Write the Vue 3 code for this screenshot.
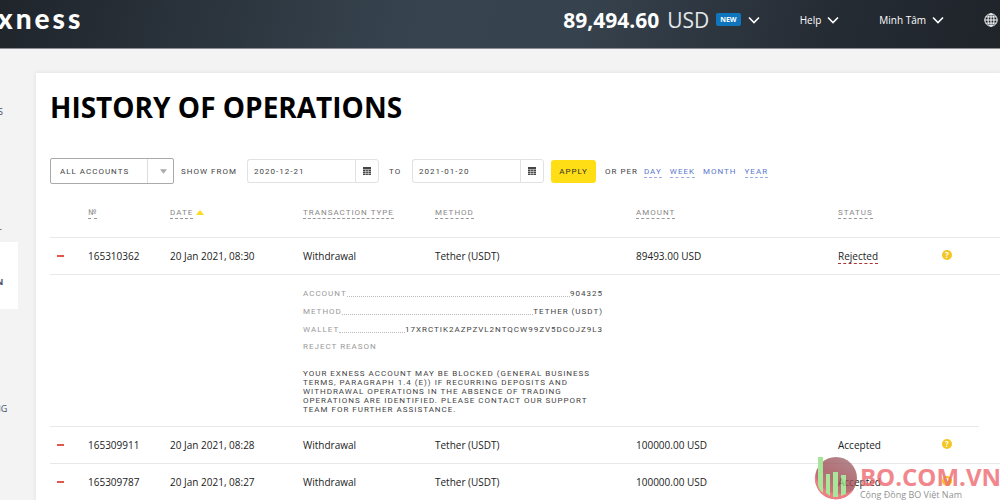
<script setup>
import { ref } from 'vue'

const account = ref('all')
const from = ref('2020-12-21')
const to = ref('2021-01-20')

const menu = [
  { label: 'S', cls: 'm-first' },
  { label: '-', cls: 'm-second' },
  { label: 'N', cls: 'active' },
  { label: 'NG', cls: 'm-last' }
]
const periods = [
  { label: 'DAY', dashed: true },
  { label: 'WEEK', dashed: true },
  { label: 'MONTH', dashed: false },
  { label: 'YEAR', dashed: true }
]
const columns = ['№', 'DATE', 'TRANSACTION TYPE', 'METHOD', 'AMOUNT', 'STATUS']
const rows = [
  {
    id: '165310362', date: '20 Jan 2021, 08:30', amount: '89493.00 USD', status: 'Rejected',
    details: [
      ['ACCOUNT', '904325'],
      ['METHOD', 'TETHER (USDT)'],
      ['WALLET', '17XRCTIK2AZPZVL2NTQCW99ZV5DCOJZ9L3']
    ]
  },
  { id: '165309911', date: '20 Jan 2021, 08:28', amount: '100000.00 USD', status: 'Accepted' },
  { id: '165309787', date: '20 Jan 2021, 08:27', amount: '100000.00 USD', status: 'Accepted' }
]
</script>

<template>
  <div class="page">
    <header class="topbar">
      <a class="logo" href="#">exness</a>
      <nav class="top-nav">
        <button class="balance" type="button">
          <strong>89,494.60</strong>
          <span class="currency">USD</span>
          <span class="badge">NEW</span>
          <svg class="chev" viewBox="0 0 12 8"><path d="M1 1.5l5 5 5-5" /></svg>
        </button>
        <button class="top-link" type="button">
          Help
          <svg class="chev" viewBox="0 0 12 8"><path d="M1 1.5l5 5 5-5" /></svg>
        </button>
        <button class="top-link" type="button">
          Minh Tâm
          <svg class="chev" viewBox="0 0 12 8"><path d="M1 1.5l5 5 5-5" /></svg>
        </button>
        <button class="top-link" type="button" aria-label="Language">
          <svg class="globe" viewBox="0 0 14 14">
            <circle cx="7" cy="7" r="6.2" />
            <ellipse cx="7" cy="7" rx="3" ry="6.2" />
            <path d="M7 .8v12.4M.8 7h12.4M1.8 3.9h10.4M1.8 10.1h10.4" />
          </svg>
        </button>
      </nav>
    </header>

    <div class="body">
      <nav class="sidebar">
        <a v-for="m in menu" :key="m.label" href="#" :class="m.cls">{{ m.label }}</a>
      </nav>

      <main class="card">
        <h1>HISTORY OF OPERATIONS</h1>

        <form class="filters" @submit.prevent>
          <div class="select">
            <select v-model="account" aria-label="Accounts">
              <option value="all">ALL ACCOUNTS</option>
            </select>
            <span class="arrow"><svg viewBox="0 0 8 5"><path d="M0 0h8L4 5z" /></svg></span>
          </div>
          <label class="from-label" for="from">SHOW FROM</label>
          <div class="date">
            <input id="from" v-model="from" type="text">
            <button type="button" aria-label="Pick start date">
              <svg viewBox="0 0 8 8"><path d="M0 0h8v8H0z" /><path class="lines" d="M0 2.5h8M0 4.5h8M0 6.5h8M2.7 2.5v5.5M5.3 2.5v5.5" /></svg>
            </button>
          </div>
          <label class="to-label" for="to">TO</label>
          <div class="date">
            <input id="to" v-model="to" type="text">
            <button type="button" aria-label="Pick end date">
              <svg viewBox="0 0 8 8"><path d="M0 0h8v8H0z" /><path class="lines" d="M0 2.5h8M0 4.5h8M0 6.5h8M2.7 2.5v5.5M5.3 2.5v5.5" /></svg>
            </button>
          </div>
          <button class="apply" type="submit">APPLY</button>
          <span class="per">OR PER</span>
          <div class="periods">
            <a v-for="p in periods" :key="p.label" href="#" :class="{ dashed: p.dashed }">{{ p.label }}</a>
          </div>
        </form>

        <table>
          <colgroup>
            <col class="c-toggle"><col class="c-id"><col class="c-date"><col class="c-type">
            <col class="c-method"><col class="c-amount"><col class="c-status"><col class="c-help"><col>
          </colgroup>
          <thead>
            <tr>
              <th></th>
              <th v-for="c in columns" :key="c">
                <span class="sort">{{ c }}</span>
                <svg v-if="c === 'DATE'" class="up" viewBox="0 0 8 5"><path d="M0 5h8L4 0z" /></svg>
              </th>
              <th></th>
              <th></th>
            </tr>
          </thead>
          <tbody v-for="(r, i) in rows" :key="r.id">
            <tr class="op" :class="{ 'after-details': i > 0 && rows[i - 1].details }">
              <td><button class="minus" type="button" aria-label="Toggle details"></button></td>
              <td>{{ r.id }}</td>
              <td>{{ r.date }}</td>
              <td>Withdrawal</td>
              <td>Tether (USDT)</td>
              <td>{{ r.amount }}</td>
              <td><span :class="{ rejected: r.status === 'Rejected' }">{{ r.status }}</span></td>
              <td><button class="q" type="button">?</button></td>
              <td></td>
            </tr>
            <tr v-if="r.details" class="more">
              <td colspan="3"></td>
              <td colspan="6">
                <dl>
                  <div v-for="d in r.details" :key="d[0]">
                    <dt>{{ d[0] }}</dt><i></i><dd>{{ d[1] }}</dd>
                  </div>
                </dl>
                <p class="reason">REJECT REASON</p>
                <p class="text">YOUR EXNESS ACCOUNT MAY BE BLOCKED (GENERAL BUSINESS<br>TERMS, PARAGRAPH 1.4 (E)) IF RECURRING DEPOSITS AND<br>WITHDRAWAL OPERATIONS IN THE ABSENCE OF TRADING<br>OPERATIONS ARE IDENTIFIED. PLEASE CONTACT OUR SUPPORT<br>TEAM FOR FURTHER ASSISTANCE.</p>
              </td>
            </tr>
          </tbody>
        </table>
      </main>
    </div>

    <div class="watermark">
      <svg viewBox="0 0 44 44">
        <defs>
          <linearGradient id="disc" x1="0.8" y1="0" x2="0.2" y2="1">
            <stop offset="0" stop-color="#a06a70" />
            <stop offset="0.5" stop-color="#a04a52" />
            <stop offset="1" stop-color="#e0555c" />
          </linearGradient>
        </defs>
        <circle cx="22" cy="22" r="21" fill="url(#disc)" />
        <path d="M1 20a21 21 0 0 0 39 13q-6 6-14 5Q8 38 1 20z" fill="#ea5f66" />
        <path d="M4 1h5v36q-5-4-5-9zM12 18h4v22l-4-3zM19 16h5v25h-5zM27 19h5v19l-5 2z" fill="#93e083" />
      </svg>
      <div>
        <div class="wm-name">BO.COM.VN</div>
        <div class="wm-sub">Cộng Đồng BO Việt Nam</div>
      </div>
    </div>
  </div>
</template>

<style>
body { margin: 0; background: #f3f3f4; }
html { overflow: hidden; }
</style>

<style scoped>
.page {
  position: relative;
  height: 100vh;
  overflow: hidden;
  display: flex;
  flex-direction: column;
  background: #f3f3f4;
  font-family: "Open Sans", "Noto Sans", sans-serif;
  color: #222;
}
button, input, select { font: inherit; margin: 0; padding: 0; color: inherit; border: 0; background: none; }
a { text-decoration: none; color: inherit; }

.topbar {
  flex: none;
  display: flex;
  justify-content: space-between;
  height: 48px;
  border-bottom: 1px solid #8d8f94;
  background: linear-gradient(105deg, #20252c 0%, #262d35 12%, #37444f 42%, #36424d 58%, #262c34 82%, #1f242b 100%);
  color: #fff;
}
.logo {
  margin-left: -20px;
  font: 900 28px/36px Lato, sans-serif;
  letter-spacing: 3px;
}
.top-nav { display: flex; align-items: center; gap: 40px; height: 39px; margin-right: 2px; }
.top-nav button { display: flex; align-items: center; }
.chev { width: 12px; height: 8px; fill: none; stroke: #fff; stroke-width: 1.6; }
.balance { font-size: 21px; line-height: 28px; }
.balance strong { font-weight: 700; }
.currency { margin-left: 8px; color: #e4e7ea; }
.badge {
  margin: 0 7px;
  padding: 0 4px;
  border-radius: 2px;
  background: #0f75bd;
  font-size: 7px;
  font-weight: 700;
  line-height: 13px;
}
.top-link { font-size: 10px; gap: 6px; }
.globe { width: 14px; height: 14px; fill: none; stroke: #fff; stroke-width: 1; }

.body { flex: 1; display: flex; min-height: 0; }
.sidebar {
  flex: none;
  width: 18px;
  margin-right: 18px;
  display: flex;
  flex-direction: column;
  align-items: flex-start;
  font-size: 9px;
  line-height: 12px;
  color: #4a4d63;
}
.sidebar .m-first { margin: 57px 0 0 -2px; }
.sidebar .m-second { margin: 105px 0 0 -1px; }
.sidebar .active {
  align-self: stretch;
  margin-top: 7px;
  padding: 34px 0 21px;
  text-indent: -4px;
  background: #fff;
  font-weight: 700;
}
.sidebar .m-last { margin: 94px 0 0 -6px; }

.card {
  flex: 1;
  min-width: 0;
  margin-top: 24px;
  padding-left: 14px;
  background: #fff;
  box-shadow: 0 0 4px #dcdcde;
}
h1 { margin: 15px 0 0; font-size: 28px; font-weight: 700; line-height: 38px; color: #000; }

.filters {
  display: flex;
  align-items: center;
  margin-top: 31px;
  height: 28px;
  font-family: Roboto, "Open Sans", sans-serif;
  font-size: 8px;
  letter-spacing: 1px;
  color: #444;
  white-space: nowrap;
}
.select {
  position: relative;
  width: 124px;
  height: 26px;
  box-sizing: border-box;
  border: 1px solid #aaa;
  border-radius: 2px;
}
.select select { width: 100%; height: 24px; padding-left: 9px; appearance: none; letter-spacing: 1px; }
.arrow {
  position: absolute;
  top: 0;
  right: 0;
  width: 26px;
  height: 24px;
  box-sizing: border-box;
  padding-left: 6px;
  border-left: 1px solid #ddd;
  display: flex;
  align-items: center;
  justify-content: center;
  pointer-events: none;
}
.arrow svg { width: 7px; height: 5px; fill: #aaa; }
.from-label { width: 66px; margin-left: 7px; }
.to-label { width: 13px; margin: 0 10px; }
.date { display: flex; width: 132px; height: 24px; }
.date input {
  flex: 1;
  min-width: 0;
  padding-left: 6px;
  border: 1px solid #e2e2e2;
  border-right: 0;
  border-radius: 3px 0 0 3px;
  letter-spacing: 1px;
}
.date button {
  width: 24px;
  border: 1px solid #e2e2e2;
  border-radius: 0 3px 3px 0;
  display: flex;
  align-items: center;
  justify-content: center;
}
.date svg { width: 8px; height: 8px; fill: #444; }
.date .lines { stroke: #fff; stroke-width: .5; fill: none; }
.apply {
  width: 45px;
  height: 23px;
  margin-left: 7px;
  border-radius: 3px;
  background: #ffde16;
  color: #333;
  letter-spacing: 1px;
}
.per { margin: 0 6px 0 9px; }
.periods { display: flex; gap: 8px; color: #5b76cc; line-height: 11px; }
.periods a { border-top: 1px solid transparent; border-bottom: 1px solid transparent; }
.periods .dashed { border-bottom: 1px dashed #9aace6; }

table { width: 100%; margin-top: 4px; border-collapse: collapse; table-layout: fixed; }
.c-toggle { width: 38px; }
.c-id { width: 82px; }
.c-date { width: 133px; }
.c-type { width: 132px; }
.c-method { width: 201px; }
.c-amount { width: 202px; }
.c-status { width: 104px; }
.c-help { width: 37px; }
th, td { padding: 0; text-align: left; }
th {
  height: 48px;
  font-family: Roboto, "Open Sans", sans-serif;
  font-size: 8px;
  font-weight: 400;
  line-height: 11px;
  letter-spacing: 1px;
  color: #888;
  white-space: nowrap;
}
.sort { display: inline-block; border-bottom: 1px dashed #999; }
.up { width: 8px; height: 5px; margin-left: 3px; fill: #fcdc20; }
.op td { height: 36px; border-top: 1px solid #e8e8e8; font-size: 10px; line-height: 16px; white-space: nowrap; }
.op.after-details td:last-child { border-top: 0; }
tbody:last-child { border-bottom: 1px solid #e8e8e8; }
.minus { display: block; width: 7px; height: 2px; margin-left: 7px; background: #e2574c; }
.rejected { display: inline-block; line-height: 14px; border-bottom: 1px dashed #a33; }
.q {
  display: block;
  width: 10px;
  height: 10px;
  margin-bottom: 3px;
  border-radius: 50%;
  background: #f3c623;
  color: #fff;
  font-size: 8px;
  font-weight: 700;
  line-height: 10px;
}
.more td {
  border-top: 1px solid #e8e8e8;
  height: 151px;
  vertical-align: top;
  font-family: Roboto, "Open Sans", sans-serif;
  font-size: 8px;
  letter-spacing: 1px;
}
dl { width: 300px; margin: 10px 0 0; }
dl div { display: flex; height: 18px; line-height: 18px; }
dt { color: #999; }
dl i { flex: 1; height: 11px; border-bottom: 1px dotted #bbb; }
dd { margin: 0; color: #444; }
.reason { margin: 0; line-height: 16px; color: #999; }
.text { margin: 14px 0 0; line-height: 9px; color: #444; }

.watermark {
  position: absolute;
  right: -1px;
  bottom: 0;
  display: flex;
  align-items: flex-end;
  gap: 2px;
  opacity: .8;
  white-space: nowrap;
}
.watermark svg { width: 44px; height: 44px; }
.wm-name { font-size: 24px; font-weight: 700; line-height: 24px; color: #ee6a70; }
.wm-sub { font-size: 9px; line-height: 11px; color: #777; }
</style>
